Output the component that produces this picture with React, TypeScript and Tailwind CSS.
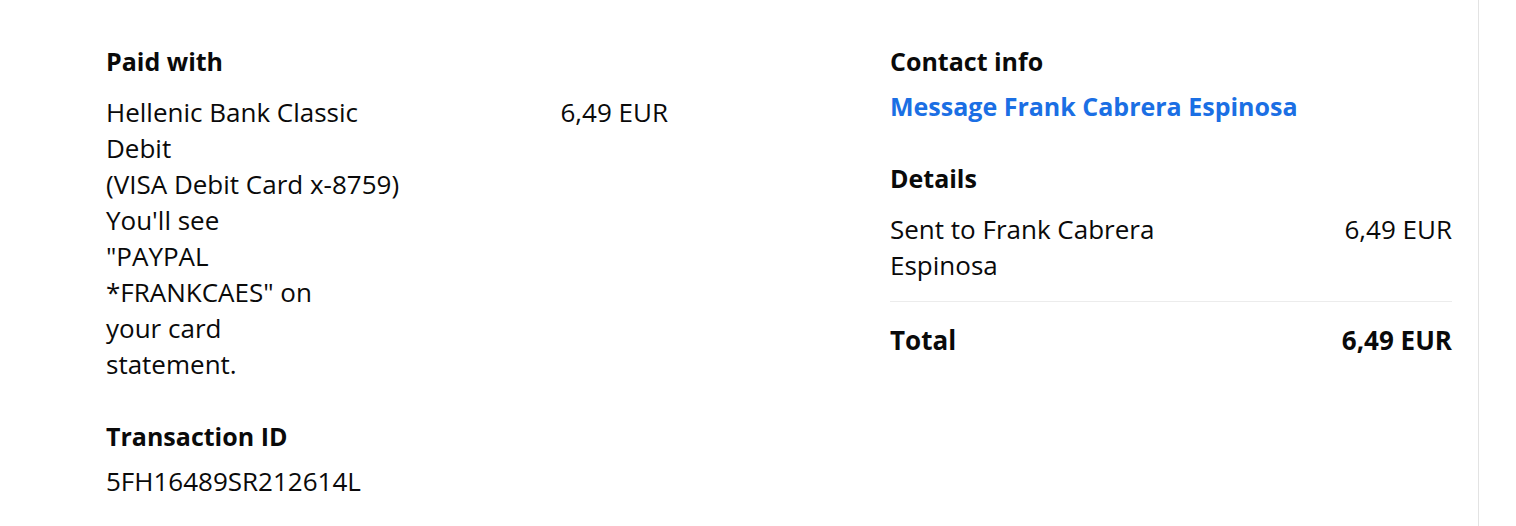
export default function App() {
  return (
    <div className="flex min-h-[526px] w-full bg-white text-[26px] leading-[36px] text-[#0a0a0a]" style={{ fontFamily: '"Open Sans", Lato, sans-serif' }}>
      <div className="w-[1479px] shrink-0 border-r border-[#e3e3e3] pl-[106px] pr-[27px] pt-[43px]">
        <div className="flex gap-[222px]">
          {/* left column */}
          <div className="w-[562px] shrink-0">
            <h2 className="text-[25px] font-bold mb-[9px]">Paid with</h2>
            <div className="flex justify-between pt-[6px]">
              <div>
                <p>
                  Hellenic Bank Classic
                  <br />
                  Debit
                </p>
                <p className="whitespace-nowrap">(VISA Debit Card x-8759)</p>
                <p>
                  You'll see
                  <br />
                  "PAYPAL
                  <br />
                  *FRANKCAES" on
                  <br />
                  your card
                  <br />
                  statement.
                </p>
              </div>
              <div className="whitespace-nowrap">6,49 EUR</div>
            </div>

            <h2 className="text-[25px] font-bold mt-[36px] mb-[9px]">Transaction ID</h2>
            <p>5FH16489SR212614L</p>
          </div>

          {/* right column */}
          <div className="w-[562px] shrink-0">
            <h2 className="text-[25px] font-bold mb-[9px]">Contact info</h2>
            <a href="#" className="text-[25px] font-bold text-[#1b6fe4]">
              Message Frank Cabrera Espinosa
            </a>

            <h2 className="text-[25px] font-bold mt-[36px] mb-[9px]">Details</h2>
            <div className="flex justify-between pt-[6px] pb-[18px] border-b border-[#ececec]">
              <p>
                Sent to Frank Cabrera
                <br />
                Espinosa
              </p>
              <p className="whitespace-nowrap">6,49 EUR</p>
            </div>
            <div className="flex justify-between pt-[20px] font-bold">
              <p>Total</p>
              <p className="whitespace-nowrap">6,49 EUR</p>
            </div>
          </div>
        </div>
      </div>
      <div className="flex-1" />
    </div>
  );
}
